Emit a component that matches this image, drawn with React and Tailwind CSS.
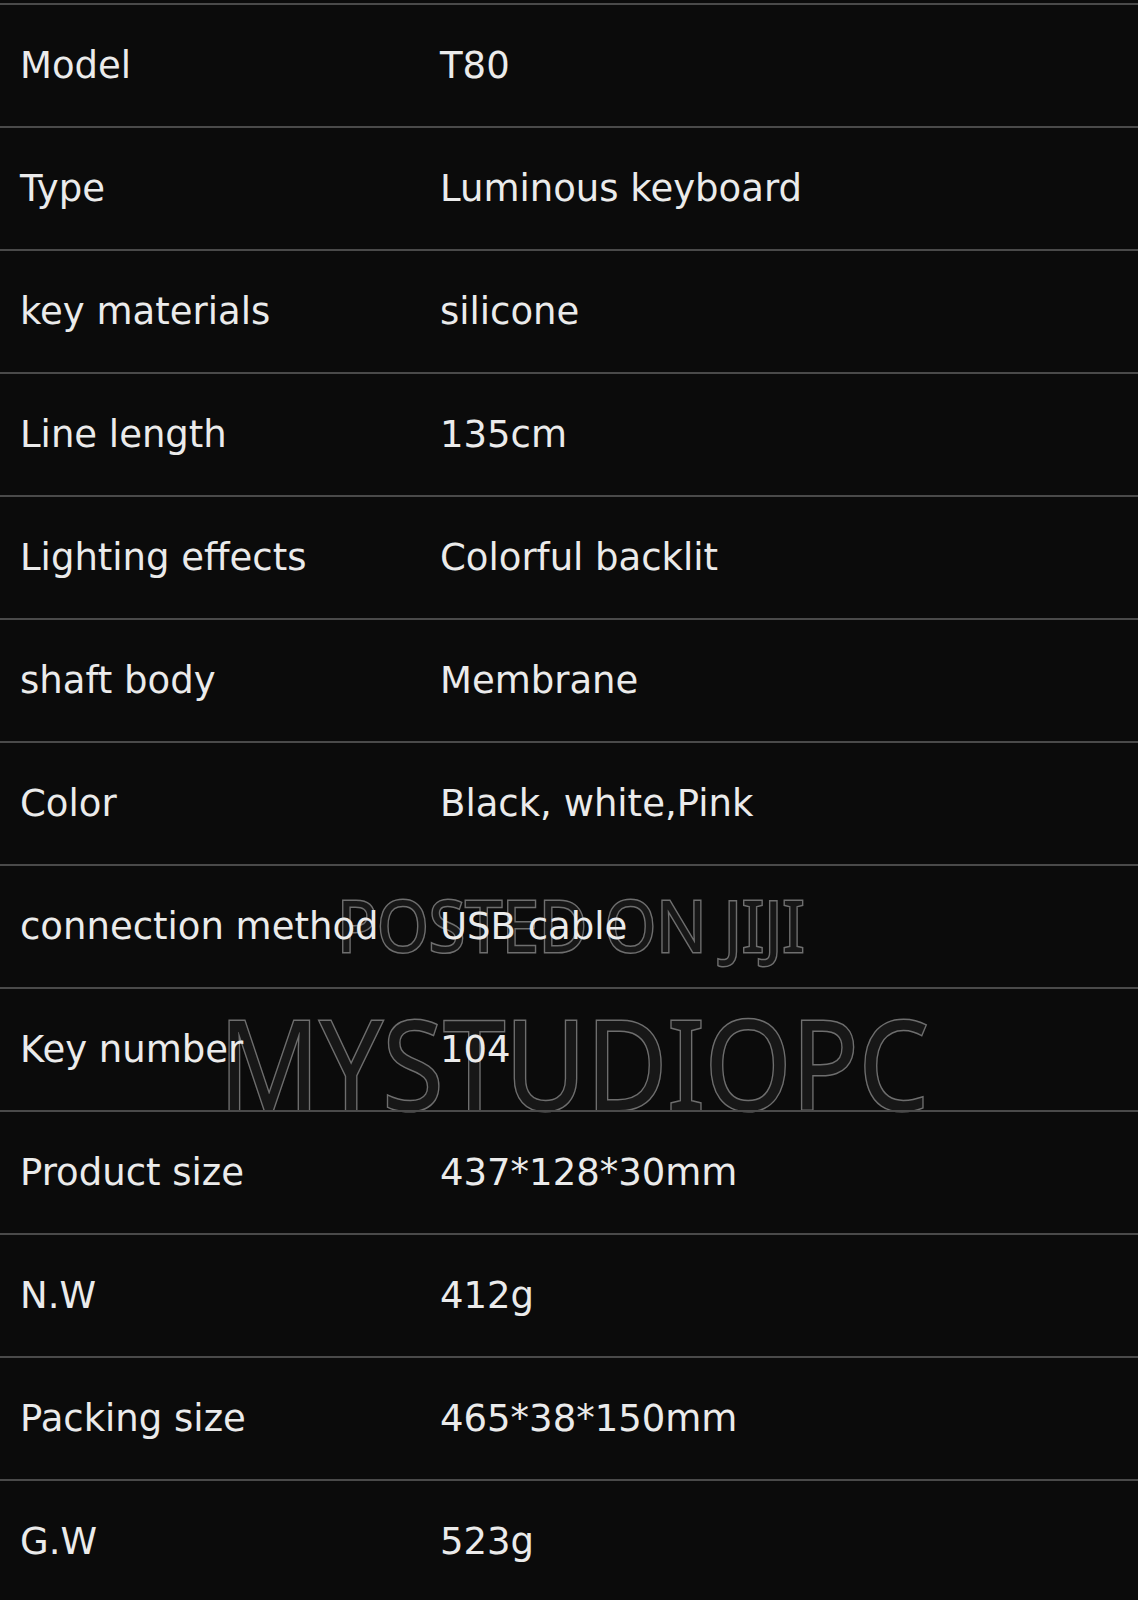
const specs = [
  ['Model', 'T80'],
  ['Type', 'Luminous keyboard'],
  ['key materials', 'silicone'],
  ['Line length', '135cm'],
  ['Lighting effects', 'Colorful backlit'],
  ['shaft body', 'Membrane'],
  ['Color', 'Black, white,Pink'],
  ['connection method', 'USB cable'],
  ['Key number', '104'],
  ['Product size', '437*128*30mm'],
  ['N.W', '412g'],
  ['Packing size', '465*38*150mm'],
  ['G.W', '523g'],
];

export default function App() {
  return (
    <div className="relative w-[1138px] h-[1600px] overflow-hidden bg-[#0b0b0b] pt-[3px] font-['DejaVu_Sans',sans-serif] text-[#ebebeb]">
      {/* watermark sits under the row text */}
      <div className="pointer-events-none absolute left-[337px] top-[888px] text-[72px] leading-none font-['Noto_Sans',sans-serif] text-[#171717] [-webkit-text-stroke:3px_#6e6e6e] [paint-order:stroke_fill] scale-x-[0.92] origin-left whitespace-nowrap">
        POSTED ON JIJI
      </div>
      <div className="pointer-events-none absolute left-[219px] top-[1000px] text-[124px] leading-none font-['Noto_Sans',sans-serif] text-[#171717] [-webkit-text-stroke:3px_#6e6e6e] [paint-order:stroke_fill] scale-x-[0.895] origin-left whitespace-nowrap">
        MYSTUDIOPC
      </div>

      <div className="relative">
        {specs.map(([label, value]) => (
          <div key={label} className="flex h-[123px] items-center border-t-2 border-[#4a4a4a] pr-[3px]">
            <div className="w-[440px] pl-[20px] text-[37px] whitespace-nowrap">{label}</div>
            <div className="text-[37px] whitespace-nowrap">{value}</div>
          </div>
        ))}
      </div>
    </div>
  );
}
